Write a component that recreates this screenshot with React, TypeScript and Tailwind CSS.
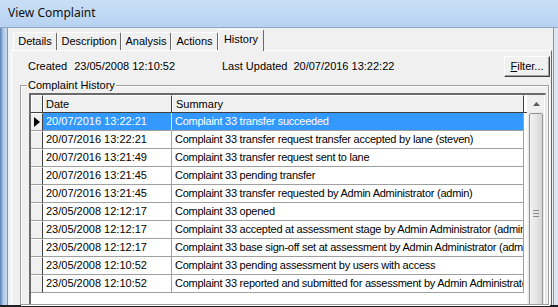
import React from "react";

const rows = [
  ["20/07/2016 13:22:21", "Complaint 33 transfer succeeded"],
  ["20/07/2016 13:22:21", "Complaint 33 transfer request transfer accepted by lane (steven)"],
  ["20/07/2016 13:21:49", "Complaint 33 transfer request sent to lane"],
  ["20/07/2016 13:21:45", "Complaint 33 pending transfer"],
  ["20/07/2016 13:21:45", "Complaint 33 transfer requested by Admin Administrator (admin)"],
  ["23/05/2008 12:12:17", "Complaint 33 opened"],
  ["23/05/2008 12:12:17", "Complaint 33 accepted at assessment stage by Admin Administrator (admin)"],
  ["23/05/2008 12:12:17", "Complaint 33 base sign-off set at assessment by Admin Administrator (admin)"],
  ["23/05/2008 12:10:52", "Complaint 33 pending assessment by users with access"],
  ["23/05/2008 12:10:52", "Complaint 33 reported and submitted for assessment by Admin Administrator (admin)"],
];

const tabs = [
  { label: "Details", w: "w-[44px]" },
  { label: "Description", w: "w-[64px]" },
  { label: "Analysis", w: "w-[50px]" },
  { label: "Actions", w: "w-[47px]" },
];

function Tab({ label, w }: { label: string; w: string }) {
  return (
    <div
      className={`${w} h-[18px] flex items-center justify-center border-l border-t border-white border-r border-r-[#696969] rounded-t-[2px] bg-[#f0f0f0]`}>
      {label}
    </div>
  );
}

function Row({ date, text, selected }: { date: string; text: string; selected?: boolean }) {
  return (
    <div className="flex h-[18px]">
      <div className="w-[12px] shrink-0 bg-[#f0f0f0] border-t border-t-white border-b border-b-[#a0a0a0] border-r border-r-[#404040] flex items-center justify-center">
        {selected && (
          <svg width="6" height="10" viewBox="0 0 6 10">
            <polygon points="0,0 6,5 0,10" fill="#000" />
          </svg>
        )}
      </div>
      <div
        className={`w-[129px] shrink-0 pl-[3px] flex items-center border-b border-r whitespace-nowrap ${
          selected ? "bg-[#3399ff] text-white border-b-[#a0a0a0] border-r-[#d8e8f8]" : "border-[#a0a0a0]"
        }`}>
        {date}
      </div>
      <div
        className={`w-[352px] shrink-0 pl-[3px] flex items-center border-b border-r overflow-hidden whitespace-nowrap tracking-[-0.25px] ${
          selected ? "bg-[#3399ff] text-white border-[#a0a0a0]" : "border-[#a0a0a0]"
        }`}>
        {text}
      </div>
    </div>
  );
}

export default function App() {
  return (
    <div className="w-[558px] h-[307px] overflow-hidden bg-[#f0f0f0] flex flex-col text-[11px] text-black font-['Liberation_Sans',Arial,sans-serif]">
      {/* title bar */}
      <div className="h-[28px] shrink-0 flex items-center pl-[8px] pb-[1px] bg-gradient-to-b from-[#c9dff6] to-[#b7d2f1] border-b border-[#92a6bf]">
        <span className="font-['Noto_Sans',sans-serif] text-[12px] text-[#111]">View Complaint</span>
      </div>

      <div className="flex flex-1 min-h-0">
        <div className="w-[8px] shrink-0 bg-gradient-to-r from-[#5b81b4] via-[#b3cbe8] to-[#c8dbf0] border-r border-[#8597ad]" />

        <div className="flex-1 min-w-0 flex flex-col pl-[3px] pr-[1px]">
          {/* tabs */}
          <div className="h-[22px] shrink-0 flex items-end pl-[2px] relative z-10">
            {tabs.map((t) => (
              <Tab key={t.label} label={t.label} w={t.w} />
            ))}
            <div className="w-[46px] h-[22px] -mb-[1px] pb-[3px] flex items-center justify-center border-l border-t border-white border-r border-r-[#696969] rounded-t-[2px] bg-[#f0f0f0]">
              History
            </div>
          </div>

          {/* panel */}
          <div className="flex-1 min-h-0 flex flex-col border-l border-t border-white border-r border-r-[#696969]">
            <div className="h-[21px] mt-[5px] shrink-0 flex items-center pl-[16px] pr-[1px]">
              <div className="w-[194px] flex gap-[7px]">
                <span>Created</span>
                <span>23/05/2008 12:10:52</span>
              </div>
              <div className="flex gap-[6px]">
                <span>Last Updated</span>
                <span>20/07/2016 13:22:22</span>
              </div>
              <button className="ml-auto w-[46px] h-[21px] bg-[#f0f0f0] border border-t-white border-l-white border-r-[#404040] border-b-[#404040] shadow-[inset_-1px_-1px_0_#a0a0a0]">
                <span className="underline">F</span>ilter...
              </button>
            </div>

            {/* group box */}
            <div className="relative flex-1 min-h-0 mt-[8px] ml-[8px] mr-[2px] flex flex-col pt-[7px] pl-[8px] pr-[2px] border border-[#a0a0a0] shadow-[inset_1px_1px_0_#ffffff,1px_1px_0_#ffffff]">
              <span className="absolute -top-[8px] left-[6px] px-[1px] bg-[#f0f0f0] leading-[14px]">Complaint History</span>

              {/* grid */}
              <div className="flex-1 min-h-0 flex bg-white border-l-2 border-t-2 border-[#6a6a6a] border-r border-r-[#e0e0e0] overflow-hidden">
                <div className="w-[496px] shrink-0 flex flex-col">
                  <div className="flex h-[18px] shrink-0 border-b border-[#404040]">
                    <div className="w-[12px] shrink-0 bg-[#f0f0f0] border-t border-l border-white border-r border-r-[#404040]" />
                    <div className="w-[129px] shrink-0 pl-[2px] flex items-center bg-[#f0f0f0] border-t border-l border-white border-r border-r-[#404040]">
                      Date
                    </div>
                    <div className="w-[352px] shrink-0 pl-[3px] flex items-center bg-[#f0f0f0] border-t border-l border-white border-r border-r-[#404040]">
                      Summary
                    </div>
                  </div>
                  {rows.map((r, i) => (
                    <Row key={i} date={r[0]} text={r[1]} selected={i === 0} />
                  ))}
                </div>

                {/* scrollbar */}
                <div className="w-[17px] shrink-0 flex flex-col bg-[#e9e9e9] border-l border-[#f4f4f4]">
                  <div className="h-[17px] shrink-0 flex items-center justify-center bg-[#f0f0f0]">
                    <svg width="7" height="4" viewBox="0 0 7 4">
                      <polygon points="0,4 3.5,0 7,4" fill="#5a5a5a" />
                    </svg>
                  </div>
                  <div className="h-[201px] shrink-0 mx-[1px] mt-[1px] rounded-[2px] border border-[#979797] bg-gradient-to-r from-[#f2f2f2] via-[#e6e6e6] to-[#d6d6d6] flex flex-col items-center justify-center gap-[2px]">
                    <div className="w-[6px] h-[1px] bg-[#8a8a8a]" />
                    <div className="w-[6px] h-[1px] bg-[#8a8a8a]" />
                    <div className="w-[6px] h-[1px] bg-[#8a8a8a]" />
                  </div>
                </div>
              </div>
            </div>
          </div>
        </div>

        <div className="w-[5px] shrink-0 border-l border-[#8597ad] bg-[#dce7f3]" />
      </div>

      <div className="h-[2px] shrink-0 bg-[#1e1e1e]" />
    </div>
  );
}
